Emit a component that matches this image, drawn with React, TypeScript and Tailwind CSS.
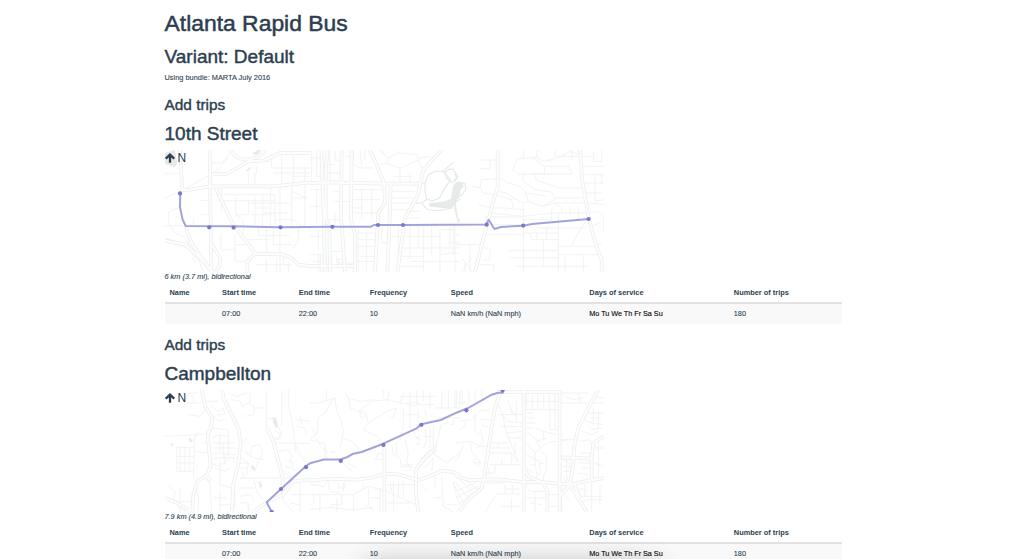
import { ReactNode } from 'react';

type Tile = { x: number; y: number; minor: string; major: string; areas?: string; shore?: string };
type RouteMap = { viewBox: string; tiles: Tile[]; route: string; stops: [number, number][] };

const tenthStreet: RouteMap = {
  viewBox: '165 150 439 122',
  tiles: [
    {
      x: 160,
      y: 148,
      minor:
        'M15 76H55 M15 150L60 130L95 112L150 80L180 60L215 5 M70 125L60 140 M15 234H77 M25 190V225L45 255L78 270 M25 195L40 185L60 178 M155 45H180L205 30 M163 140H345V230 M170 158H345 M185 120V195 M227 150V200H265V155 M285 150V232 M308 140V235 M332 110V235 M360 110V372 M395 110V235 M265 75V105 M285 75V110 M265 165H390 M285 180H330 M310 195H385 M227 200L250 215V235 M275 200H335 M345 215H400L425 235 M395 130L440 150 M395 150H440 M120 157H148 M120 200H148 M100 235V210 M183 258V305H225V258 M225 290H262 M250 240V275H330 M225 305V340H262 M295 240V262H390 M320 240V312 M340 240V290H395 M370 325V350H395 M415 240V275L400 300 M290 55V78 M335 15V60H450 M365 15V105 M400 15V105 M270 40H330 M340 75H450 M395 85H450 M435 60V235 M15 270L60 285L100 305 M55 295L75 290 M85 265V290L110 320L130 372 M95 330L110 345 M105 325L118 338 M75 275L150 372 M20 280L85 300L105 330 M320 330V372 M350 330V372 M290 350H390 M385 340V372',
      major:
        'M60 5L66 122L61 136 M66 125L85 126L148 115H340L450 103 M149 5L154 372 M160 78H200L265 40L310 38L360 15H450 M214 5C218 30 250 38 270 33C300 28 310 15 315 3 M164 112L215 222L285 315 M262 372V340L285 317L365 319L395 330L415 350L450 354 M77 235L95 285L125 330L155 372 M15 278L75 290L110 320L160 372 M156 290L180 330L178 355L165 372',
      areas: 'M15 15L45 5L52 45L45 58L15 48Z M258 68L270 58L274 60L262 71Z M278 15L295 5H303L295 18L282 20Z',
    },
    {
      x: 310,
      y: 148,
      minor:
        'M5 5V100 M20 5V85H35 M60 5V100 M35 50H70 M25 75H90 M75 5V35L100 40 M105 25H125 M130 5V50L150 60H190 M150 5L155 55 M165 5V35 M205 5L235 30L230 45L210 50 M235 30L265 15L320 20L325 30L360 25 M230 45L270 60L295 50L325 35L335 60 M215 5L225 25 M260 5L265 15 M270 60V105 M300 75V105 M250 85H305 M0 30H35 M0 125H35 M70 130H90 M70 160H120 M130 125H220 M130 155H210 M155 125V215 M130 180H160 M130 195H205 M185 125V210 M240 130H315 M240 150H310 M245 165H325 M245 185H300 M290 190H330 M280 210H330 M75 195V235 M55 215H90 M0 175H35 M20 120V225 M70 245H95 M145 245V372 M170 245V372 M145 275H200 M135 295H195 M150 325H195 M140 340H200 M215 240V285H235 M265 235V340 M240 265H270 M275 265H390 M300 235V330 M270 300H450 M325 235V300 M340 235V372 M365 235V320 M270 325H340 M390 240V372 M300 340H450 M393 320L420 315H450 M420 235V300 M415 285H450 M430 260H450 M270 355H340 M80 325V345H130 M80 335H110 M25 245V310 M0 265H35 M25 320V372 M0 320H40 M10 340H60 M60 310H95 M45 355V372 M0 240V250 M85 330V350 M430 235V320 M395 245H430 M140 255H195L210 245',
      major:
        'M34 5L38 110L42 235L45 372 M53 5L47 70V210L58 240L60 372 M95 5L93 200L105 372 M125 5L123 215L135 260V372 M0 105L60 103L220 107H330 M178 5L200 50L222 105L225 165L205 195L195 372 M242 110L240 190L232 372 M395 5L340 65L332 105L322 145L285 210L262 372 M0 354H135 M35 320V372',
      areas: 'M355 166L405 160L423 152L428 118L435 104L450 100V143L435 165L425 182L360 176Z',
      shore:
        'M333 105L345 105L355 80L375 70H398L408 80L422 95L400 128L388 150L365 160L350 152L345 130V105 M398 70L430 43 M405 72L415 65L428 62L443 85L425 105L410 90Z M317 165H336L345 178L355 185L390 188L422 180L438 162L452 152 M336 165L350 155 M436 165L434 180L442 210L450 220',
    },
    {
      x: 455,
      y: 148,
      minor:
        'M80 36H125 M105 36V60 M105 62H75 M178 48L190 33L245 28L265 40L310 30 M245 28V10L255 8 M178 50L175 65L190 78H275 M205 5V30 M235 30L268 55V78 M268 55H340L352 78H225 M300 5V25H370 M350 5V35 M310 30L345 10L375 20 M275 35L290 40 M50 114L75 120L80 95L140 92L160 105L195 115L210 130L220 160L205 165L175 150L155 135L130 130 M75 120L85 135L140 145L170 155L175 180 M70 170L110 180H150L205 185 M205 165V372 M240 80L245 98L270 105L310 120H380 M205 78V100L240 125L290 132L300 155L280 165L260 175L235 165L220 160 M210 135L245 140L275 145 M300 150H385 M265 175L300 165L320 180V195 M300 165H390 M90 207H205 M110 195L205 205L290 195H395 M345 175V195 M370 175V215 M290 185V225 M310 195V372 M205 215H290 M110 230H205 M85 260H205 M205 255H310 M225 255L230 275H310 M275 235V275 M245 255V275 M250 240H390 M350 290L370 255L395 215 M160 308H310 M165 330H310 M180 355H400 M310 295H430 M310 320H440 M265 275V355 M0 230V372 M45 290V372 M0 290H85 M20 330L35 350L50 330 M30 345V372 M35 350L20 372 M35 350L55 372 M85 300H105V335H85 M75 350H115V372 M380 55H450 M380 80H450 M385 105H450 M420 80V160L445 155 M440 80V110 M390 135H440 M400 165L450 170 M395 195L430 190L445 205V250 M410 235L435 225 M415 10V40H440V5 M375 25H415 M385 320V372 M420 295L440 285 M330 325V372',
      major:
        'M128 5V115L95 232L60 372 M375 5L382 100L402 213L422 290L440 335V372',
      areas: 'M0 122L12 104L22 103L26 115L12 132L0 140Z',
      shore: 'M0 78L6 92L0 100 M12 104L30 106L32 128L18 142L0 152L3 185L10 225',
    },
  ],
  route:
    'M180.3 193.3L180 207.3L182.7 219.7L185.7 226L233.3 226.3L280.3 227.3L332.3 226.7H371L374 225H403L486.5 224.5L488.7 219.7L494.5 229L500.7 227L523.3 225.7L532 224L588.7 219',
  stops: [
    [180, 193.4],
    [209.2, 227.3],
    [233.6, 227.6],
    [280.5, 227.3],
    [332.4, 226.8],
    [378, 225],
    [403, 225],
    [486.7, 224.7],
    [523.2, 225.6],
    [588.6, 219],
  ],
};

const campbellton: RouteMap = {
  viewBox: '165 390 439 122',
  tiles: [
    {
      x: 160,
      y: 388,
      minor:
        'M80 45H125 M85 80L120 85 M75 45L85 15H115 M100 45V20 M120 85L135 65 M140 40H175 M155 55L175 70L190 60L195 80H170 M160 85L175 100L190 95 M205 15L230 25L260 15 M215 35L240 40L250 60 M245 55L265 45L285 60L280 80L255 85 M270 10V45 M290 60H315 M15 145L105 141L140 138 M100 160L115 130 M105 141L100 270 M50 178H105 M50 178V250H100 M60 178V250 M75 178V250 M88 178V250 M50 205H100 M50 225H100 M105 190L150 195 M130 165H150 M145 140L160 120L200 125 M155 150L180 140L205 145 M160 165H220 M165 180H225 M180 140V195 M205 125V205 M160 195L225 200 M160 210H225L220 225 M190 165V210 M150 225L180 235L205 215 M165 240L195 250L210 240 M180 220V290L215 300 M195 200V230 M270 205L275 175L300 170L308 190L300 215 M255 190L270 205L290 212L315 215 M245 165L260 150 M245 210L265 225L260 260 M240 225H265 M240 240H262 M245 250L255 270H240 M270 240L285 250 M285 250L295 215 M240 270H380L400 268 M280 270L290 310L310 335 M290 285L310 280 M235 300H280 M240 325L270 320L285 340 M240 345H265V372 M340 165H385L450 167 M345 130L360 135L365 150H345 M335 150L355 155L365 125 M320 5V120 M365 5V115 M345 80L360 130 M320 90L345 95 M385 5V50L400 120L405 170L430 215L445 230 M405 95L450 100 M410 115L435 120L440 140 M420 85L425 110 M405 165V190L415 200 M355 190L385 185L395 200L390 225 M370 250L390 265L410 260 M385 215L400 225L395 240L410 250 M375 235L390 240 M365 310L370 340L400 372 M130 265L150 290L155 372 M105 285L115 330V372 M60 300V372 M50 340H105 M20 290L45 310L40 340 M180 310V372 M160 330H200 M175 350H210 M225 310V360 M260 350L275 372 M420 280V372 M395 320H450 M390 345L420 350 M15 325L50 350L75 372',
      major:
        'M186 5L190 30L210 70L235 120L242 170L235 225L220 290L215 372 M125 5L135 55L157 90L152 120L143 140L152 235L140 262L112 280L100 320L97 372 M320 120L340 160L355 220L368 270V310 M140 265L155 280 M15 330L50 345L85 365 M280 372L320 343L370 320L400 280L450 275',
      areas:
        'M336 88L347 90L354 112L350 122L341 108Z M87 150L98 155L97 163L87 160Z M31 165L39 167L41 173L33 172Z M279 230L287 245L282 246L273 239Z M296 283L304 285L307 296L300 300Z',
    },
    {
      x: 310,
      y: 388,
      minor:
        'M0 45H20L50 38L75 30L80 70L95 100L100 130L90 180 M50 5V40 M70 30L50 70L25 90L20 140L0 150 M100 5L115 30L150 40L195 35 M115 30L120 60L145 70L185 40L230 35L320 55 M145 70L170 85L175 105L160 125 M150 70L165 70L172 80L160 90L150 85Z M220 5V30 M240 5L230 45 M280 15L270 50 M300 10V60 M320 5V50H370 M340 5V40 M360 15V60 M270 25H380 M290 45H330 M160 125L200 145L220 165 M175 105L230 70L260 60 M260 60L250 85L240 90 M280 60V110L270 160 M300 60V120 M285 80H320 M325 65V130 M345 65L350 90 M0 155L45 168 M20 150L35 180L50 185V210 M5 120L20 140 M95 150L125 160L145 180L140 200 M45 170V210 M100 225L125 250 M115 225L140 240 M60 190L80 195 M195 215L205 195L220 200V215Z M245 170L250 200L270 210L275 240 M260 160V200 M285 155L295 195L290 220L300 240 M275 235H300 M280 230H305V245L285 250 M310 130L320 150L330 145 M315 150L330 155L320 175 M315 165L335 170 M345 125L350 160L340 180 M360 120V180 M370 110V200 M340 145H370 M380 170L375 200L410 225L440 200L450 190 M330 215L360 185L375 190 M340 225L365 200 M345 240L370 210L365 250 M395 110L375 180 M0 290L40 295L60 270 M55 280L60 310L90 315 M85 280V300H105V280 M100 285V310 M0 320H130L175 295L230 310L260 325L320 350 M10 320V345 M30 320V372 M80 330V372 M95 320V350H60 M130 320V372 M160 285V300 M175 300V345L190 372 M180 330H210V300 M165 350L185 365 M210 325V372 M0 365L60 358L120 365L190 360 M250 280V372 M280 280V330 M230 290H315 M240 280L245 310 M265 280V325 M230 345H300 M395 265L400 355L430 372 M370 330H395 M430 280L440 330L450 350 M410 350H440 M330 290L350 310 M375 260V300 M385 90H450 M400 105L430 110V95 M385 130L395 110 M375 60H450V5 M395 5V60 M415 5V60 M435 5V60',
      major:
        'M0 278L60 272L140 275L180 270L225 257L270 260L325 277L370 260L395 248L430 252L450 262 M223 172V372 M318 245V320L325 372 M318 245L340 215L370 185',
    },
    {
      x: 455,
      y: 388,
      minor:
        'M5 5V60 M22 5V50 M42 5V45 M60 5V40 M80 5V25 M0 45H30 M15 100L50 95L65 80 M35 90L25 120L15 125 M60 75V130L75 140 M70 70L105 65 M75 95H110 M80 110L105 120 M0 165L45 160L75 175H100 M45 160L50 190L65 210 M25 170L10 210L0 220 M55 220L65 210L80 225L70 235Z M60 225L72 222L75 230 M75 125L85 160L65 180 M130 50L145 85L160 100L200 105 M130 80H200 M145 85L150 120L160 150L190 220 M140 115H205 M165 60L185 90 M160 35L170 75L200 80 M185 40V100 M155 135L205 130 M160 150H200L205 170 M110 165H160 M105 180H165 M100 195H170L190 225 M130 165V180 M105 230H195 M120 230V255H90 M100 240V260 M140 215V235 M170 195V230 M180 160V200 M215 15V65 M232 15V65 M249 15V65 M266 15V65 M283 15V65 M300 15V125 M208 40H310 M208 65H310 M215 75H235 M215 90H240 M215 105H240 M215 120H235 M285 65V125H310 M215 130L245 155L255 180L240 195L215 165 M240 120L265 130L305 140 M255 180L275 165L305 160 M265 130V160 M245 160L275 150 M215 200L240 215L245 260 M260 190L275 205V240L265 265 M240 215L255 220V250L245 270 M265 225L250 230 M215 240L235 255 M225 230H240 M265 265V280 M240 195V215 M320 15H400 M330 25L350 35L385 30 M320 45H400 M370 15L375 40 M340 155L320 160 M320 155H370 M320 205H355 M325 215L345 225 M320 235H350 M325 250H350 M335 215V270 M345 225V260 M385 95L410 105L445 110 M395 75H450 M405 90H440 M415 60V110 M430 70V120 M400 110L410 125L440 120 M380 130L410 140L430 130 M375 160L405 155L410 170 M410 45H450 M420 25L450 30 M375 195H410 M370 225H410 M380 240H405 M420 180H450 M415 225L450 235 M430 155V270 M370 255L400 260 M0 280L40 330 M0 295L25 345 M15 275L60 320 M30 275L70 305 M0 310L60 285 M0 330L70 295 M10 350L50 315 M90 372L125 318H195 M150 290V318 M150 303H195 M172 290V318 M140 355H195 M170 330V372 M95 285H150 M210 290L225 310H270 M215 330H275 M240 310V372 M225 345L260 350 M275 320H310 M320 300V372 M285 355H310 M330 320L345 340 M365 325H445 M380 345L400 335H440 M390 290V325 M410 285V372 M435 290V350 M370 300L400 310',
      major:
        'M138 5L120 60L105 150L88 265L80 300L40 335L10 372 M206 5V372 M145 12H310 M314 5V372 M430 5L400 60L370 120L357 180L355 230L345 290 M0 262L40 276L85 275L130 274L205 282H260L345 290L400 278L450 270 M206 240L220 265L265 285L277 310V372 M345 290L395 372 M320 208L410 212V275 M445 145L415 165L410 210 M345 290L310 330 M355 285L375 330 M330 270L345 290',
    },
  ],
  route:
    'M271.7 512L266.7 502.3L281 489L293 478L306 466L310 463.3L324 459.5H340.7L347.3 457L353.3 453.7L361.7 452L383.3 443.7L416.7 428.3L421.3 424.3L440.7 420L455 413.3L468.3 408L491.7 394.7L498.3 392.7H502.7V389',
  stops: [
    [271.7, 511.8],
    [281, 489],
    [306, 467.2],
    [340.8, 460.9],
    [383.4, 444.9],
    [421.4, 424.8],
    [466.4, 410.3],
    [502.6, 390.6],
  ],
};

const columns = [
  'w-[52.5px]',
  'w-[76.8px]',
  'w-[71px]',
  'w-[81px]',
  'w-[138.5px]',
  'w-[144.5px]',
  'w-[112.7px]',
];
const headings = ['Name', 'Start time', 'End time', 'Frequency', 'Speed', 'Days of service', 'Number of trips'];
const trip = ['', '07:00', '22:00', '10', 'NaN km/h (NaN mph)', 'Mo Tu We Th Fr Sa Su', '180'];

function Map({ map }: { map: RouteMap }) {
  return (
    <div className="relative h-[122px] w-[439px]">
      <svg className="block h-full w-full" viewBox={map.viewBox} fill="none" strokeLinejoin="round">
        {map.tiles.map((t, i) => (
          <g key={i} transform={`translate(${t.x} ${t.y}) scale(.33333)`}>
            {t.areas && <path d={t.areas} fill="#e8eaea" />}
            <path d={t.minor} stroke="#f0f2f2" strokeWidth="2.7" />
            {t.shore && <path d={t.shore} stroke="#e3e8e8" strokeWidth="3.2" />}
          </g>
        ))}
        {map.tiles.map((t, i) => (
          <path
            key={i}
            transform={`translate(${t.x} ${t.y}) scale(.33333)`}
            d={t.major}
            stroke="#ebeeee"
            strokeWidth="11"
          />
        ))}
        {map.tiles.map((t, i) => (
          <path
            key={i}
            transform={`translate(${t.x} ${t.y}) scale(.33333)`}
            d={t.major}
            stroke="#fdfdfd"
            strokeWidth="6.5"
          />
        ))}
        <path d={map.route} stroke="#a3a3dc" strokeWidth="2" />
        {map.stops.map(([x, y]) => (
          <circle key={x} cx={x} cy={y} r="2.1" fill="#7878cc" />
        ))}
      </svg>
      <div className="absolute top-0 left-0 flex h-[16px] items-center gap-[3px] text-[12px] leading-none">
        <svg className="h-[10px] w-[10px]" viewBox="0 0 10 10" fill="none" stroke="#2c3e50" strokeWidth="2.3">
          <path d="M5 9.8V1.8M.8 5.7L5 1.6L9.2 5.7" />
        </svg>
        <span>N</span>
      </div>
    </div>
  );
}

function Heading({ children }: { children: ReactNode }) {
  return (
    <h2 className="h-[22px] text-[19px] leading-[22px] whitespace-nowrap [-webkit-text-stroke:0.45px]">
      {children}
    </h2>
  );
}

function Pattern({ name, length, map }: { name: string; length: string; map: RouteMap }) {
  return (
    <section className="h-[240.3px]">
      <h3 className="h-[18px] text-[15.4px] leading-[19px] [-webkit-text-stroke:0.4px]">Add trips</h3>
      <div className="mt-[10px] mb-[5px]">
        <Heading>{name}</Heading>
      </div>
      <Map map={map} />
      <p className="h-[10px] text-[7.35px] leading-[10px] italic [-webkit-text-stroke:0.1px]">{length}</p>
      <table className="w-[677px] table-fixed border-collapse text-left">
        <thead>
          <tr className="h-[21px] border-b-[2px] border-[#e2e2e2]">
            {headings.map((h, i) => (
              <th key={h} className={`${columns[i]} pt-[1px] pl-[5px] leading-[10px] font-bold whitespace-nowrap`}>
                {h}
              </th>
            ))}
          </tr>
        </thead>
        <tbody>
          <tr className="h-[21px] bg-[#f9f9f9]">
            {trip.map((v, i) => (
              <td
                key={i}
                className={`pb-[1px] pl-[5px] text-[7.3px] leading-[10px] whitespace-nowrap [-webkit-text-stroke:0.1px] ${i === 5 ? 'tracking-[-0.05px] text-black' : ''}`}
              >
                {v}
              </td>
            ))}
          </tr>
        </tbody>
      </table>
    </section>
  );
}

export default function App() {
  return (
    <div className="relative h-[559px] overflow-hidden bg-white pl-[164.5px] font-['Liberation_Sans',sans-serif] text-[7.4px] text-[#2c3e50]">
      <h1 className="mt-[10px] h-[27px] text-[22.9px] leading-[27px] [-webkit-text-stroke:0.5px]">
        Atlanta Rapid Bus
      </h1>
      <div className="mt-[9px]">
        <Heading>Variant: Default</Heading>
      </div>
      <p className="mt-[5px] mb-[13px] h-[9px] leading-[9px] [-webkit-text-stroke:0.1px]">
        Using bundle: MARTA July 2016
      </p>
      <Pattern name="10th Street" length="6 km (3.7 mi), bidirectional" map={tenthStreet} />
      <Pattern name="Campbellton" length="7.9 km (4.9 mi), bidirectional" map={campbellton} />
      <div className="absolute top-[565px] left-[366px] h-[20px] w-[292px] rounded-lg shadow-[0_0_26px_2px_rgba(0,0,0,0.26)]" />
    </div>
  );
}
